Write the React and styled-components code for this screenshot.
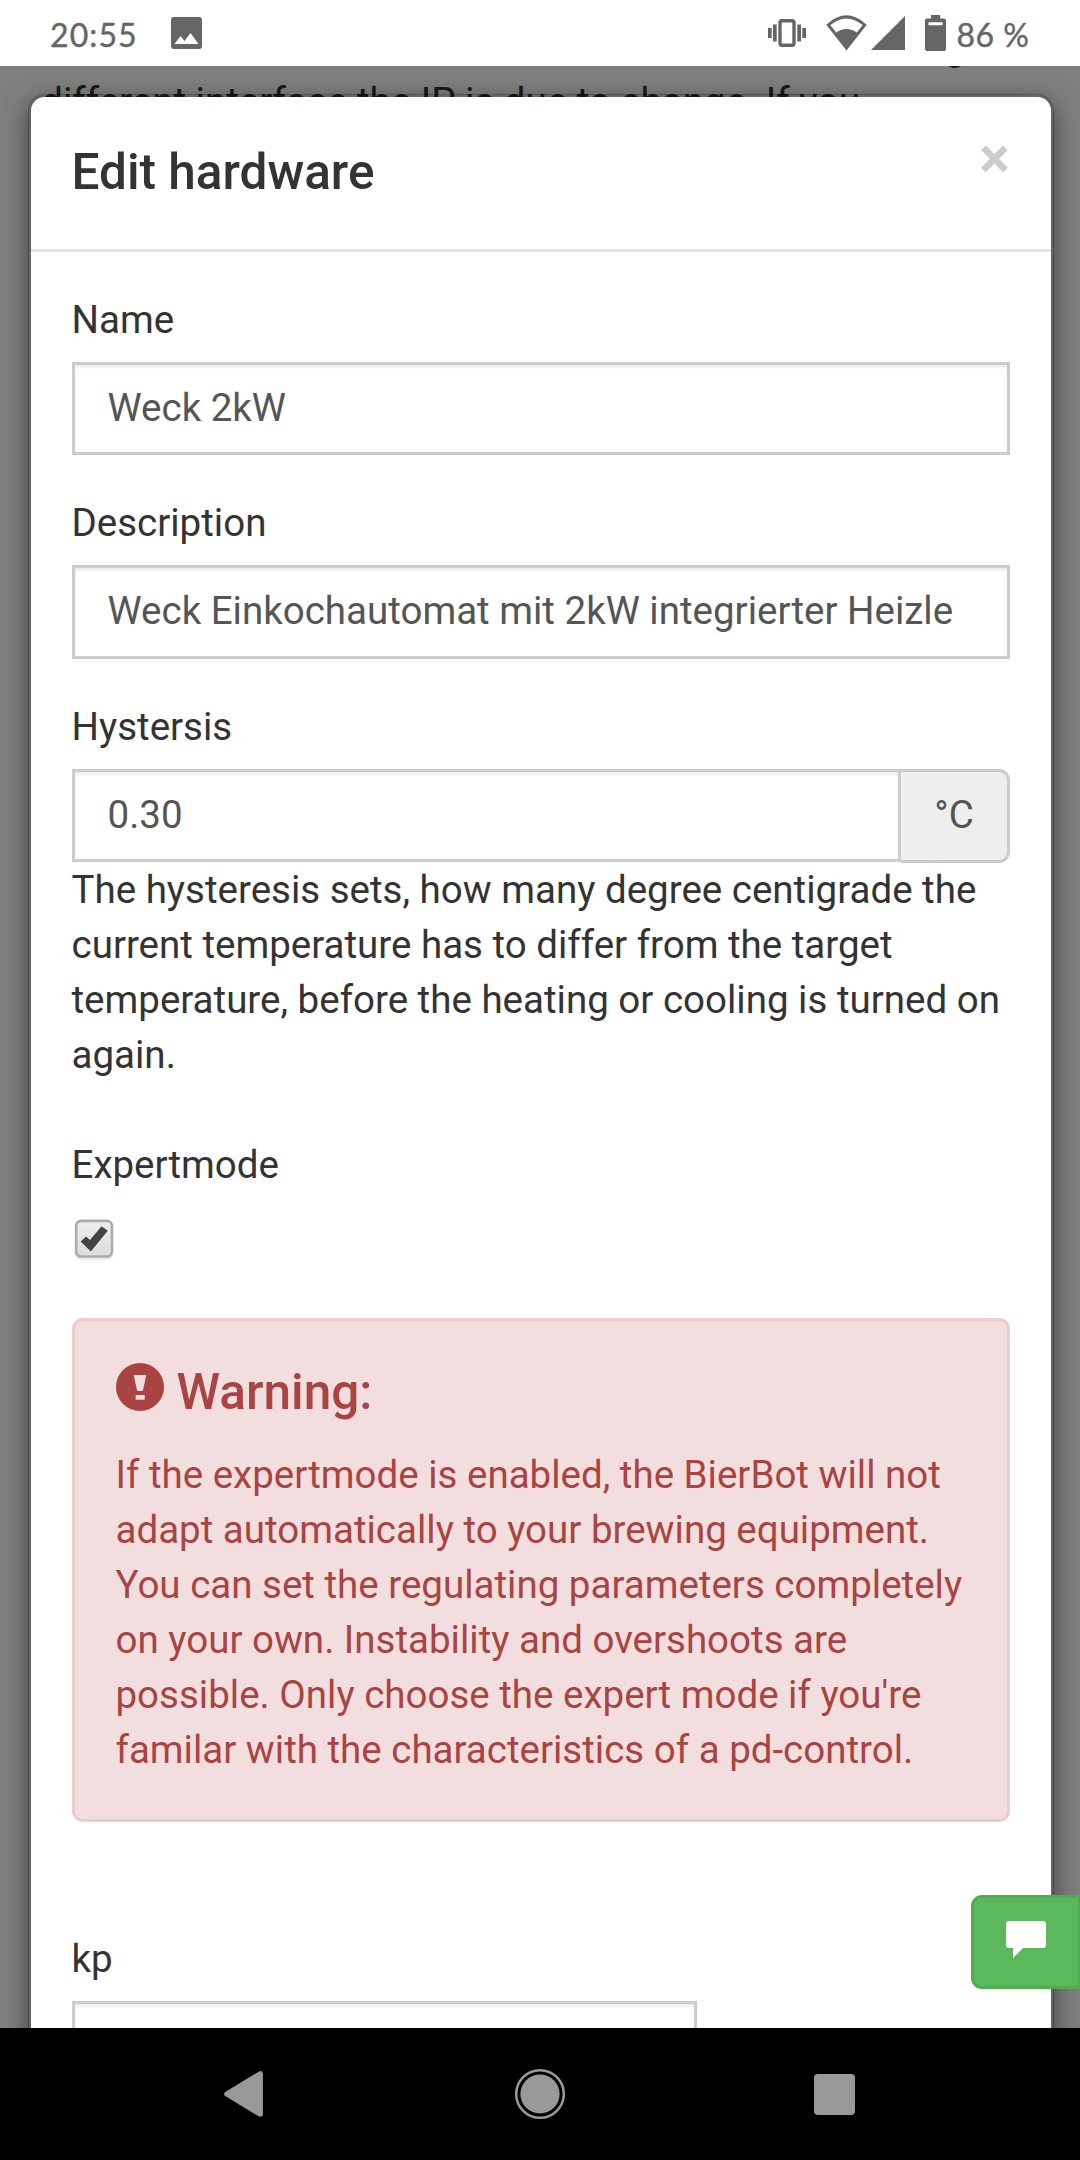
import React from 'react';
import styled, { createGlobalStyle } from 'styled-components';

const Global = createGlobalStyle`
  *, *::before, *::after { box-sizing: border-box; }
  body {
    margin: 0;
    font-family: Roboto, "Liberation Sans", sans-serif;
    font-size: 38.5px;
    line-height: 55px;
    color: #333;
    background: #000;
  }
`;

const Screen = styled.div`
  width: 1080px;
  height: 2160px;
  display: flex;
  flex-direction: column;
  overflow: hidden;
`;

const StatusBar = styled.header`
  flex: 0 0 66px;
  display: flex;
  align-items: center;
  justify-content: space-between;
  padding: 0 50.5px 0 50px;
  background: #fff;
  color: #666;
  font-family: Lato, Roboto, sans-serif;
  font-size: 32px;
  line-height: 40px;
  -webkit-text-stroke: 0.4px #666;
  svg { display: block; }
`;

const StatusGroup = styled.div`
  display: flex;
  align-items: center;
  gap: ${(p) => p.$gap}px;
  height: 66px;
`;

const StatusText = styled.span`
  letter-spacing: ${(p) => p.$spacing || 0}px;
  padding-top: 3px;
`;

const Viewport = styled.main`
  position: relative;
  flex: 1 1 auto;
  min-height: 0;
  overflow: hidden;
  background: #fff;
`;

const Page = styled.div`
  position: absolute;
  inset: -47px 0 auto 0;
  padding: 0 41.25px;
`;

const PageLine = styled.div`
  height: 55px;
  white-space: nowrap;
  text-align: ${(p) => (p.$end ? 'right' : 'left')};
  padding-right: ${(p) => (p.$end ? 73 : 0)}px;
`;

const Backdrop = styled.div`
  position: absolute;
  inset: 0;
  padding: 27.5px 26px 0 27.5px;
  background: rgba(0, 0, 0, 0.5);
`;

const Modal = styled.section`
  height: 2200px;
  background: #fff;
  background-clip: padding-box;
  border: 3px solid rgba(0, 0, 0, 0.2);
  border-radius: 16.5px;
  box-shadow: 0 8.25px 24.75px rgba(0, 0, 0, 0.5);
`;

const ModalHeader = styled.div`
  display: flex;
  justify-content: space-between;
  align-items: flex-start;
  height: 155px;
  padding: 40.25px 41px;
  border-bottom: 3px solid #e5e5e5;
`;

const Title = styled.h4`
  margin: 0;
  font-size: 49.5px;
  font-weight: 500;
  line-height: 70.7px;
`;

const Close = styled.button`
  padding: 0;
  margin-top: -6.5px;
  border: 0;
  background: none;
  color: #000;
  opacity: 0.2;
  font: 700 57.75px/57.75px Roboto, sans-serif;
`;

const ModalBody = styled.div`
  padding: 40.25px 41px;
`;

const Field = styled.div`
  margin-bottom: ${(p) => p.$gap ?? 40.25}px;
`;

const Label = styled.label`
  display: block;
  margin-bottom: 14.75px;
`;

const Input = styled.input`
  display: block;
  width: ${(p) => p.$width || '100%'};
  min-width: 0;
  height: 93.5px;
  padding: 15px 33px 17px 33px;
  border: 3px solid #ccc;
  border-radius: 0;
  background: #fff;
  color: #555;
  font: inherit;
  outline: 0;
  box-shadow: inset 0 2.75px 2.75px rgba(0, 0, 0, 0.075);
`;

const InputGroup = styled.div`
  display: flex;
  height: 93.5px;
`;

const Addon = styled.span`
  flex: 0 0 109px;
  height: 94px;
  display: flex;
  align-items: center;
  justify-content: center;
  padding-bottom: 3px;
  border: 3px solid #ccc;
  border-left: 0;
  border-radius: 0 11px 11px 0;
  background: #eee;
  color: #555;
`;

const Help = styled.p`
  margin: 0 0 55px;
`;

const CheckRow = styled.div`
  height: 70px;
  padding: 11.5px 0 0 1.25px;
  svg { display: block; }
`;

const Alert = styled.div`
  height: 504px;
  margin-top: 41.5px;
  padding: 42px 41px;
  border: 3px solid #ebccd1;
  border-radius: 11px;
  background: #f2dede;
  color: #a94442;
`;

const AlertTitle = styled.h4`
  display: flex;
  align-items: flex-start;
  gap: 13px;
  margin: 0 0 27px;
  font-size: 49.5px;
  font-weight: 500;
  line-height: 54.5px;
`;

const AlertHeading = styled.span`
  padding-top: 2px;
`;

const AlertText = styled.p`
  margin: 0;
`;

const ExpertFields = styled.div`
  padding-top: 109px;
`;

const ChatButton = styled.button`
  position: absolute;
  right: 0;
  top: 1829px;
  width: 109px;
  height: 94px;
  padding: 0 0 5px;
  display: flex;
  align-items: center;
  justify-content: center;
  border: 3px solid #4cae4c;
  border-right-width: 2px;
  border-radius: 11px 0 0 11px;
  background: #5cb85c;
`;

const NavBar = styled.nav`
  flex: 0 0 132px;
  display: flex;
  align-items: center;
  gap: 249px;
  padding-left: 224px;
  background: #000;
  svg { display: block; }
`;

const ImageIcon = () => (
  <svg width="31" height="32" viewBox="0 0 31 32">
    <rect width="31" height="32" rx="3" fill="#666" />
    <path d="M3.5 27 L9.5 19 L13.5 24 L19.5 16 L27.5 27 Z" fill="#fff" />
  </svg>
);

const VibrateIcon = () => (
  <svg width="38" height="28" viewBox="0 0 38 28" fill="#666">
    <rect x="12" y="1.7" width="14" height="24.6" rx="2" fill="none" stroke="#666" strokeWidth="3.4" />
    <rect x="5" y="5.5" width="3.7" height="17" />
    <rect x="0" y="9" width="3.7" height="10" />
    <rect x="29.3" y="5.5" width="3.7" height="17" />
    <rect x="34.3" y="9" width="3.7" height="10" />
  </svg>
);

const WifiIcon = () => (
  <svg width="41" height="36" viewBox="0 0 41 36">
    <path d="M2.3 10 Q20.5 -6.2 38.7 10 L20.5 33 Z" fill="none" stroke="#666" strokeWidth="3" />
    <path d="M9 18.4 Q20.5 9.5 32 18.4 L20.5 34 Z" fill="#666" />
  </svg>
);

const SignalIcon = () => (
  <svg width="34" height="34" viewBox="0 0 34 34">
    <path d="M0 34 L34 0 V34 Z" fill="#666" />
  </svg>
);

const BatteryIcon = () => (
  <svg width="21" height="36" viewBox="0 0 21 36" fill="#666">
    <path fillRule="evenodd" d="M6 0 H15.2 V3.5 H19 Q21 3.5 21 5.5 V34 Q21 36 19 36 H2 Q0 36 0 34 V5.5 Q0 3.5 2 3.5 H6 Z M3.5 7.3 V10.3 H17.5 V7.3 Z" />
  </svg>
);

const Spacer = styled.i`
  width: ${(p) => p.$w}px;
`;

const Checkbox = () => (
  <svg width="44" height="44" viewBox="0 0 44 44">
    <defs>
      <linearGradient id="box" x1="0" y1="0" x2="0" y2="1">
        <stop offset="0" stopColor="#ededed" />
        <stop offset="0.38" stopColor="#e8e8e8" />
        <stop offset="1" stopColor="#dcdcdc" />
      </linearGradient>
    </defs>
    <rect x="1.8" y="4" width="38.4" height="38" rx="6" fill="#ececec" />
    <rect x="3.2" y="2.9" width="35.8" height="35.6" rx="5" fill="url(#box)" stroke="#ababab" strokeWidth="2.6" />
    <path d="M7.7 23.5 L13 18.5 L17 22 L28.5 8.2 L34.8 12.7 L17.8 33.5 Z" fill="#444" />
  </svg>
);

const ExclamationIcon = () => (
  <svg width="48" height="48" viewBox="0 0 48 48">
    <circle cx="24" cy="24" r="24" fill="#a94442" />
    <path d="M17.8 12 H30.2 L27.2 26.5 Q26.8 28 25.5 28 H22.5 Q21.2 28 20.8 26.5 Z" fill="#f2dede" />
    <rect x="19.7" y="32" width="9" height="4.7" fill="#f2dede" />
  </svg>
);

const CommentIcon = () => (
  <svg width="40" height="37" viewBox="0 0 40 37">
    <path d="M3 0 H37 Q40 0 40 3 V24 Q40 27 37 27 H17 L7 37 V27 H3 Q0 27 0 24 V3 Q0 0 3 0 Z" fill="#fff" />
  </svg>
);

const BackIcon = () => (
  <svg width="40" height="46" viewBox="0 0 40 46">
    <path d="M3 23 L36.2 3 V43 Z" fill="#999" stroke="#999" strokeWidth="5.5" strokeLinejoin="round" />
  </svg>
);

const HomeIcon = () => (
  <svg width="52" height="52" viewBox="0 0 52 52">
    <circle cx="27" cy="26" r="23.8" fill="none" stroke="#999" strokeWidth="2.5" />
    <circle cx="27" cy="26" r="19.6" fill="#999" />
  </svg>
);

const RecentsIcon = () => (
  <svg width="41" height="41" viewBox="0 0 41 41">
    <rect width="41" height="41" rx="4" fill="#999" />
  </svg>
);

export default function App() {
  return (
    <Screen>
      <Global />
      <StatusBar>
        <StatusGroup $gap={33}>
          <StatusText $spacing={1.1}>20:55</StatusText>
          <ImageIcon />
        </StatusGroup>
        <StatusGroup $gap={4}>
          <VibrateIcon />
          <Spacer $w={12} />
          <WifiIcon />
          <SignalIcon />
          <Spacer $w={12} />
          <BatteryIcon />
          <Spacer $w={3} />
          <StatusText $spacing={0.5}>86 %</StatusText>
        </StatusGroup>
      </StatusBar>

      <Viewport>
        <Page>
          <PageLine $end>g</PageLine>
          <PageLine>different interface the IP is due to change. If you</PageLine>
        </Page>
        <Backdrop>
          <Modal>
            <ModalHeader>
              <Title>Edit hardware</Title>
              <Close>×</Close>
            </ModalHeader>
            <ModalBody>
              <Field>
                <Label>Name</Label>
                <Input defaultValue="Weck 2kW" />
              </Field>
              <Field>
                <Label>Description</Label>
                <Input defaultValue="Weck Einkochautomat mit 2kW integrierter Heizle" />
              </Field>
              <Field $gap={0}>
                <Label>Hystersis</Label>
                <InputGroup>
                  <Input defaultValue="0.30" />
                  <Addon>°C</Addon>
                </InputGroup>
                <Help>
                  The hysteresis sets, how many degree centigrade the current temperature has to
                  differ from the target temperature, before the heating or cooling is turned on
                  again.
                </Help>
              </Field>
              <Field $gap={0}>
                <Label>Expertmode</Label>
                <CheckRow>
                  <Checkbox />
                </CheckRow>
              </Field>
              <Alert>
                <AlertTitle>
                  <ExclamationIcon />
                  <AlertHeading>Warning:</AlertHeading>
                </AlertTitle>
                <AlertText>
                  If the expertmode is enabled, the BierBot will not adapt automatically to your
                  brewing equipment. You can set the regulating parameters completely on your own.
                  Instability and overshoots are possible. Only choose the expert mode if you're
                  familar with the characteristics of a pd-control.
                </AlertText>
              </Alert>
              <ExpertFields>
                <Label>kp</Label>
                <Input $width="625px" />
              </ExpertFields>
            </ModalBody>
          </Modal>
        </Backdrop>
        <ChatButton>
          <CommentIcon />
        </ChatButton>
      </Viewport>

      <NavBar>
        <BackIcon />
        <HomeIcon />
        <RecentsIcon />
      </NavBar>
    </Screen>
  );
}
